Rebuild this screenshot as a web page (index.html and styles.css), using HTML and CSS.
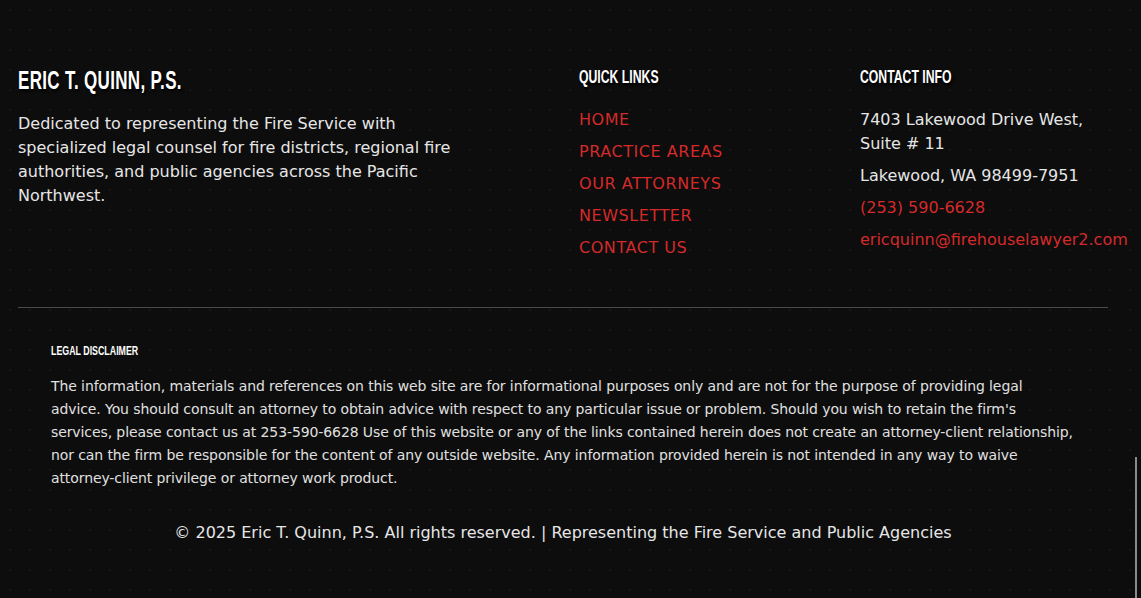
FILE: index.html
```html
<!DOCTYPE html>
<html lang="en">
<head>
<meta charset="utf-8">
<title>Eric T. Quinn, P.S. — Footer</title>
<link rel="stylesheet" href="styles.css">
</head>
<body>
<footer class="footer">
  <div class="cols">
    <div class="col about">
      <h2 class="brand"><span class="squeeze">ERIC T. QUINN, P.S.</span></h2>
      <p class="about-text">Dedicated to representing the Fire Service with specialized legal counsel for fire districts, regional fire authorities, and public agencies across the Pacific Northwest.</p>
    </div>
    <div class="col">
      <h3 class="col-title"><span class="squeeze">QUICK LINKS</span></h3>
      <ul class="links">
        <li><a href="#">HOME</a></li>
        <li><a href="#">PRACTICE AREAS</a></li>
        <li><a href="#">OUR ATTORNEYS</a></li>
        <li><a href="#">NEWSLETTER</a></li>
        <li><a href="#">CONTACT US</a></li>
      </ul>
    </div>
    <div class="col">
      <h3 class="col-title"><span class="squeeze">CONTACT INFO</span></h3>
      <ul class="contact">
        <li>7403 Lakewood Drive West, Suite # 11</li>
        <li>Lakewood, WA 98499-7951</li>
        <li><a href="#">(253) 590-6628</a></li>
        <li><a href="#">ericquinn@firehouselawyer2.com</a></li>
      </ul>
    </div>
  </div>
  <hr class="rule">
  <section class="disclaimer">
    <h4 class="disc-title"><span class="squeeze">LEGAL DISCLAIMER</span></h4>
    <p class="disc-text">The information, materials and references on this web site are for informational purposes only and are not for the purpose of providing legal<br>advice. You should consult an attorney to obtain advice with respect to any particular issue or problem. Should you wish to retain the firm's<br>services, please contact us at 253-590-6628 Use of this website or any of the links contained herein does not create an attorney-client relationship,<br>nor can the firm be responsible for the content of any outside website. Any information provided herein is not intended in any way to waive<br>attorney-client privilege or attorney work product.</p>
  </section>
  <p class="copy">© 2025 Eric T. Quinn, P.S. All rights reserved. | Representing the Fire Service and Public Agencies</p>
</footer>
<div class="scroll-line"></div>
</body>
</html>
```
FILE: styles.css
```css
html, body {
  margin: 0;
  padding: 0;
  height: 100%;
}
body {
  background-color: #0d0d0d;
  background-image: radial-gradient(circle, #171717 1px, transparent 1.2px);
  background-size: 20px 20px;
  color: #e6e6e6;
  font-family: "DejaVu Sans", "Open Sans", sans-serif;
  overflow: hidden;
}
.footer {
  padding: 64px 33px 0 18px;
}
.cols {
  display: grid;
  grid-template-columns: 561px 281px 1fr;
}
.squeeze {
  display: inline-block;
  transform: scaleX(0.68);
  transform-origin: left center;
  white-space: nowrap;
}
.brand {
  margin: 0;
  font-family: "Liberation Sans", "Arial", sans-serif;
  font-weight: 700;
  font-size: 25px;
  line-height: 32px;
  letter-spacing: 0.5px;
  color: #fff;
  text-shadow: 2px 2px 3px #000;
}
.about-text {
  margin: 16px 0 0;
  max-width: 440px;
  font-size: 16px;
  line-height: 24px;
  color: #e6e6e6;
}
.col-title {
  margin: 2px 0 0;
  font-family: "Liberation Sans", "Arial", sans-serif;
  font-weight: 700;
  font-size: 18px;
  line-height: 22px;
  color: #fff;
  text-shadow: 2px 2px 3px #000;
}
.links, .contact {
  list-style: none;
  margin: 20px 0 0;
  padding: 0;
  display: flex;
  flex-direction: column;
  gap: 8px;
}
.links li, .contact li {
  font-size: 16px;
  line-height: 24px;
}
.links a {
  color: #d42a2a;
  text-decoration: none;
  letter-spacing: 0.55px;
}
.contact li { color: #e6e6e6; }
.contact a {
  color: #d42a2a;
  text-decoration: none;
}
.rule {
  margin: 47px 0 0;
  border: 0;
  border-top: 1px solid #4a4a4a;
  height: 0;
}
.disclaimer {
  padding: 34px 0 0 33px;
}
.disc-title {
  margin: 0;
  font-family: "Liberation Sans", "Arial", sans-serif;
  font-weight: 700;
  font-size: 13px;
  line-height: 18px;
  color: #fff;
}
.disc-text {
  margin: 15px 0 0;
  font-size: 14px;
  line-height: 23px;
  letter-spacing: -0.1px;
  color: #e0e0e0;
}
.copy {
  margin: 31px 0 0;
  text-align: center;
  font-size: 16px;
  line-height: 24px;
  color: #e6e6e6;
}
.scroll-line {
  position: fixed;
  left: 1135px;
  top: 457px;
  width: 2px;
  height: 141px;
  background: #8a8a8a;
}
```
